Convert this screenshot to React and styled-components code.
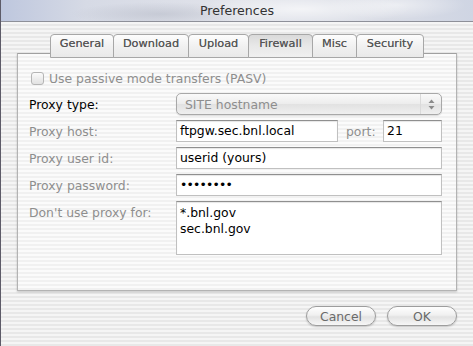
import React from 'react';
import styled, { createGlobalStyle } from 'styled-components';

const GlobalStyle = createGlobalStyle`
  html, body {
    margin: 0;
    padding: 0;
  }
  body {
    font-family: "DejaVu Sans", "Liberation Sans", sans-serif;
    background: #ececec;
  }
`;

const Window = styled.div`
  width: 473px;
  height: 346px;
  box-sizing: border-box;
  display: flex;
  flex-direction: column;
  border-left: 1px solid #5d5b68;
  overflow: hidden;
`;

const TitleBar = styled.div`
  height: 21px;
  border-bottom: 1px solid #8e9099;
  display: flex;
  align-items: center;
  justify-content: center;
  font-size: 12.6px;
  color: #333;
  background:
    radial-gradient(ellipse 110px 16px at 300px 9px, rgba(255, 255, 255, 0.65), transparent),
    radial-gradient(ellipse 70px 14px at 395px 5px, rgba(255, 255, 255, 0.5), transparent),
    radial-gradient(ellipse 90px 12px at 160px 14px, rgba(160, 165, 180, 0.35), transparent),
    linear-gradient(90deg, #bec7de 0%, #d6dae5 18%, #e1e3ea 50%, #dadde6 80%, #cfd5e3 100%);
`;

const Body = styled.div`
  flex: 1;
  padding: 12px 16px 0 16px;
  background: repeating-linear-gradient(to bottom, #f5f5f5 0 2px, #e8e8e8 2px 4px);
`;

const TabRow = styled.div`
  display: flex;
  margin-left: 33px;
  margin-bottom: -5px;
  position: relative;
  z-index: 1;
`;

const Tab = styled.div`
  width: ${(p) => p.$w}px;
  height: 24px;
  box-sizing: border-box;
  padding-bottom: 5px;
  margin-left: -1px;
  display: flex;
  align-items: center;
  justify-content: center;
  border: 1px solid #a7a7a7;
  border-radius: 4px 4px 0 0;
  font-size: 11.3px;
  color: #555;
  text-shadow: 0 0 0.4px #777;
  background: ${(p) =>
    p.$active
      ? 'linear-gradient(to bottom, #dadada, #e8e8e8 50%, #f0f0f0)'
      : 'linear-gradient(to bottom, #fdfdfd, #f1f1f1 50%, #e9e9e9)'};
  &:first-child {
    margin-left: 0;
  }
`;

const Panel = styled.div`
  height: 238px;
  box-sizing: border-box;
  border: 1px solid #b3b3b3;
  border-top-color: #a0a0a0;
  background: repeating-linear-gradient(to bottom, #fbfbfb 0 2px, #f1f1f1 2px 4px);
  box-shadow: 0 1px 2px rgba(0, 0, 0, 0.2);
  padding: 18px 14px 0 11px;
`;

const CheckRow = styled.div`
  display: flex;
  align-items: center;
  gap: 5px;
  margin-left: 2px;
  height: 13px;
  font-size: 12.4px;
  color: #8e8e8e;
`;

const Checkbox = styled.span`
  width: 13px;
  height: 13px;
  box-sizing: border-box;
  border: 1px solid #b5b5b5;
  border-radius: 3px;
  background: linear-gradient(to bottom, #fbfbfb, #ececec 55%, #e2e2e2);
`;

const Form = styled.div`
  display: grid;
  grid-template-columns: 147px 1fr;
  row-gap: 5px;
  margin-top: 8px;
  align-items: center;
`;

const Label = styled.div`
  font-size: 12.4px;
  color: ${(p) => (p.$enabled ? '#000' : '#8e8e8e')};
  align-self: ${(p) => (p.$top ? 'start' : 'center')};
  padding-top: ${(p) => (p.$top ? '4px' : '0')};
`;

const Popup = styled.div`
  height: 22px;
  box-sizing: border-box;
  display: flex;
  align-items: center;
  border: 1px solid #a8a8a8;
  border-radius: 5px;
  background: linear-gradient(to bottom, #fafafa, #ededed 48%, #e2e2e2 52%, #efefef);
  box-shadow: 0 1px 1px rgba(0, 0, 0, 0.12);
  font-size: 12.4px;
  color: #8e8e8e;
`;

const PopupText = styled.span`
  flex: 1;
  padding-left: 8px;
`;

const PopupArrows = styled.span`
  width: 20px;
  height: 100%;
  display: flex;
  align-items: center;
  justify-content: center;
  border-left: 1px solid #dadada;
`;

const FieldRow = styled.div`
  display: flex;
  align-items: center;
`;

const Field = styled.div`
  width: ${(p) => (p.$w ? `${p.$w}px` : 'auto')};
  flex: ${(p) => (p.$w ? 'none' : '1')};
  height: ${(p) => p.$h || 22}px;
  box-sizing: border-box;
  background: #fff;
  border: 1px solid #c0c0c0;
  border-top-color: #8f8f8f;
  box-shadow: inset 0 1px 1px rgba(0, 0, 0, 0.1);
  padding: ${(p) => (p.$multi ? '3px 3px' : '0 3px')};
  display: flex;
  flex-direction: column;
  justify-content: ${(p) => (p.$multi ? 'flex-start' : 'center')};
  font-size: 12.4px;
  line-height: 16px;
  color: #000;
  white-space: nowrap;
`;

const Dots = styled.span`
  letter-spacing: -0.8px;
  font-size: 12.4px;
`;

const PortLabel = styled.span`
  width: 45px;
  box-sizing: border-box;
  padding-left: 8px;
  font-size: 12.4px;
  color: #8e8e8e;
`;

const ButtonRow = styled.div`
  display: flex;
  justify-content: flex-end;
  gap: 11px;
  margin-top: 15px;
`;

const Button = styled.button`
  width: ${(p) => p.$w}px;
  height: 20px;
  padding: 0;
  border: 1px solid #9d9d9d;
  border-radius: 10px;
  background: linear-gradient(to bottom, #fefefe, #f0f0f0 45%, #e2e2e2 55%, #f7f7f7);
  box-shadow: 0 1px 2px rgba(0, 0, 0, 0.2);
  font-family: "DejaVu Sans", "Liberation Sans", sans-serif;
  font-size: 12.4px;
  color: #6a6a6a;
`;

const tabs = [
  { name: 'General', w: 64 },
  { name: 'Download', w: 76 },
  { name: 'Upload', w: 61 },
  { name: 'Firewall', w: 65, active: true },
  { name: 'Misc', w: 45 },
  { name: 'Security', w: 68 },
];

const Arrows = () => (
  <svg width="7" height="11" viewBox="0 0 7 11">
    <path d="M3.5 0.5 L6.5 4 L0.5 4 Z" fill="#8a8a8a" />
    <path d="M3.5 10.5 L6.5 7 L0.5 7 Z" fill="#8a8a8a" />
  </svg>
);

export default function App() {
  return (
    <>
      <GlobalStyle />
      <Window>
        <TitleBar>Preferences</TitleBar>
        <Body>
          <TabRow>
            {tabs.map((t) => (
              <Tab key={t.name} $w={t.w} $active={t.active}>
                {t.name}
              </Tab>
            ))}
          </TabRow>
          <Panel>
            <CheckRow>
              <Checkbox />
              Use passive mode transfers (PASV)
            </CheckRow>
            <Form>
              <Label $enabled>Proxy type:</Label>
              <Popup>
                <PopupText>SITE hostname</PopupText>
                <PopupArrows>
                  <Arrows />
                </PopupArrows>
              </Popup>

              <Label>Proxy host:</Label>
              <FieldRow>
                <Field $w={162}>ftpgw.sec.bnl.local</Field>
                <PortLabel>port:</PortLabel>
                <Field>21</Field>
              </FieldRow>

              <Label>Proxy user id:</Label>
              <Field>userid (yours)</Field>

              <Label>Proxy password:</Label>
              <Field>
                <Dots>••••••••</Dots>
              </Field>

              <Label $top>Don't use proxy for:</Label>
              <Field $multi $h={54}>
                <span>*.bnl.gov</span>
                <span>sec.bnl.gov</span>
              </Field>
            </Form>
          </Panel>
          <ButtonRow>
            <Button $w={70}>Cancel</Button>
            <Button $w={70}>OK</Button>
          </ButtonRow>
        </Body>
      </Window>
    </>
  );
}
